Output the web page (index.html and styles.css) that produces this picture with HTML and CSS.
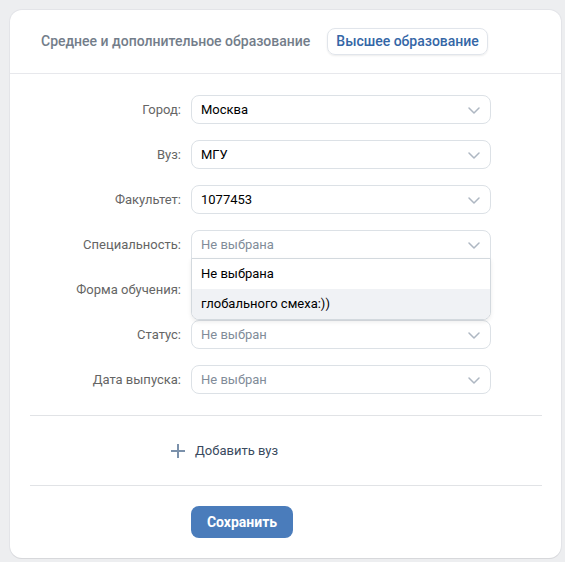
FILE: index.html
```html
<!DOCTYPE html>
<html lang="ru">
<head>
<meta charset="utf-8">
<link rel="stylesheet" href="styles.css">
</head>
<body>
<div class="card">
  <div class="tabs">
    <span class="tab">Среднее и дополнительное образование</span>
    <span class="tab tab-active">Высшее образование</span>
  </div>
  <div class="form">
    <div class="row">
      <span class="label">Город:</span>
      <div class="select"><span class="value">Москва</span><svg class="chev" width="12" height="7" viewBox="0 0 12 7"><path d="M1 1l5 5 5-5" fill="none" stroke="#aeb7c2" stroke-width="1.5" stroke-linecap="round" stroke-linejoin="round"/></svg></div>
    </div>
    <div class="row">
      <span class="label">Вуз:</span>
      <div class="select"><span class="value">МГУ</span><svg class="chev" width="12" height="7" viewBox="0 0 12 7"><path d="M1 1l5 5 5-5" fill="none" stroke="#aeb7c2" stroke-width="1.5" stroke-linecap="round" stroke-linejoin="round"/></svg></div>
    </div>
    <div class="row">
      <span class="label">Факультет:</span>
      <div class="select"><span class="value">1077453</span><svg class="chev" width="12" height="7" viewBox="0 0 12 7"><path d="M1 1l5 5 5-5" fill="none" stroke="#aeb7c2" stroke-width="1.5" stroke-linecap="round" stroke-linejoin="round"/></svg></div>
    </div>
    <div class="row">
      <span class="label">Специальность:</span>
      <div class="select select-open"><span class="placeholder">Не выбрана</span><svg class="chev" width="12" height="7" viewBox="0 0 12 7"><path d="M1 1l5 5 5-5" fill="none" stroke="#aeb7c2" stroke-width="1.5" stroke-linecap="round" stroke-linejoin="round"/></svg>
        <div class="menu">
          <div class="menu-item">Не выбрана</div>
          <div class="menu-item menu-item-hover">глобального смеха:))</div>
        </div>
      </div>
    </div>
    <div class="row">
      <span class="label">Форма обучения:</span>
      <div class="select"><span class="placeholder">Не выбрана</span><svg class="chev" width="12" height="7" viewBox="0 0 12 7"><path d="M1 1l5 5 5-5" fill="none" stroke="#aeb7c2" stroke-width="1.5" stroke-linecap="round" stroke-linejoin="round"/></svg></div>
    </div>
    <div class="row">
      <span class="label">Статус:</span>
      <div class="select"><span class="placeholder">Не выбран</span><svg class="chev" width="12" height="7" viewBox="0 0 12 7"><path d="M1 1l5 5 5-5" fill="none" stroke="#aeb7c2" stroke-width="1.5" stroke-linecap="round" stroke-linejoin="round"/></svg></div>
    </div>
    <div class="row">
      <span class="label">Дата выпуска:</span>
      <div class="select"><span class="placeholder">Не выбран</span><svg class="chev" width="12" height="7" viewBox="0 0 12 7"><path d="M1 1l5 5 5-5" fill="none" stroke="#aeb7c2" stroke-width="1.5" stroke-linecap="round" stroke-linejoin="round"/></svg></div>
    </div>
  </div>
  <div class="sep"></div>
  <div class="add">
    <svg class="plus" width="14" height="14" viewBox="0 0 14 14"><path d="M7 0v14M0 7h14" stroke="#7b91ab" stroke-width="2"/></svg>
    <span class="add-text">Добавить вуз</span>
  </div>
  <div class="sep"></div>
  <div class="actions">
    <button class="btn">Сохранить</button>
  </div>
</div>
</body>
</html>
```
FILE: styles.css
```css
* { box-sizing: border-box; }
html, body { margin: 0; }
body {
  background: #edeef0;
  padding: 10px 4px 4px 10px;
  font-family: Roboto, "Noto Sans", sans-serif;
  font-size: 13px;
  color: #000;
}
.card {
  width: 551px;
  height: 548px;
  background: #fff;
  border-radius: 12px;
  box-shadow: 0 1px 0 0 #d7d8db, 0 0 0 1px #e3e4e8;
}
.tabs {
  display: flex;
  gap: 8px;
  padding: 18px 20px 18px 22px;
  border-bottom: 1px solid #e7e8ec;
}
.tab {
  height: 27px;
  line-height: 25px;
  padding: 0 8px;
  border: 1px solid transparent;
  border-radius: 8px;
  font-size: 14px;
  font-weight: 500;
  color: #737d8a;
}
.tab-active {
  color: #3466a6;
  border-color: #e1e5eb;
  box-shadow: 0 1px 2px rgba(0,0,0,0.08);
}
.form {
  display: flex;
  flex-direction: column;
  gap: 16px;
  padding: 21px 0 21px;
}
.row {
  display: grid;
  grid-template-columns: 171px 300px;
  column-gap: 10px;
  align-items: center;
}
.label {
  text-align: right;
  color: #656565;
}
.select {
  position: relative;
  height: 29px;
  border: 1px solid #dce1e6;
  border-radius: 8px;
  display: flex;
  align-items: center;
  justify-content: space-between;
  padding: 0 10px 0 9px;
}
.select-open {
  border-radius: 8px 8px 0 0;
  z-index: 2;
}
.value { color: #000; }
.placeholder { color: #818c99; }
.chev { margin-top: 2px; }
.menu {
  position: absolute;
  left: -1px;
  right: -1px;
  top: 27px;
  background: #fff;
  border: 1px solid #d3d9de;
  border-radius: 0 0 8px 8px;
  box-shadow: 0 2px 4px rgba(0,0,0,0.08);
  overflow: hidden;
}
.menu-item {
  height: 30px;
  line-height: 30px;
  padding: 0 9px;
  color: #000;
}
.menu-item-hover { background: #f0f2f5; }
.sep {
  height: 1px;
  background: #e1e3e6;
  margin: 0 19px 0 20px;
}
.add {
  height: 69px;
  display: flex;
  align-items: center;
  gap: 10px;
  padding-left: 161px;
}
.add-text { color: #3a4a5e; }
.actions {
  padding: 20px 0 20px 181px;
}
.btn {
  height: 32px;
  width: 102px;
  border: 0;
  border-radius: 8px;
  background: #4a7cbb;
  color: #fff;
  font-family: Roboto, "Noto Sans", sans-serif;
  font-size: 14px;
  font-weight: 700;
  padding: 0;
}
```
